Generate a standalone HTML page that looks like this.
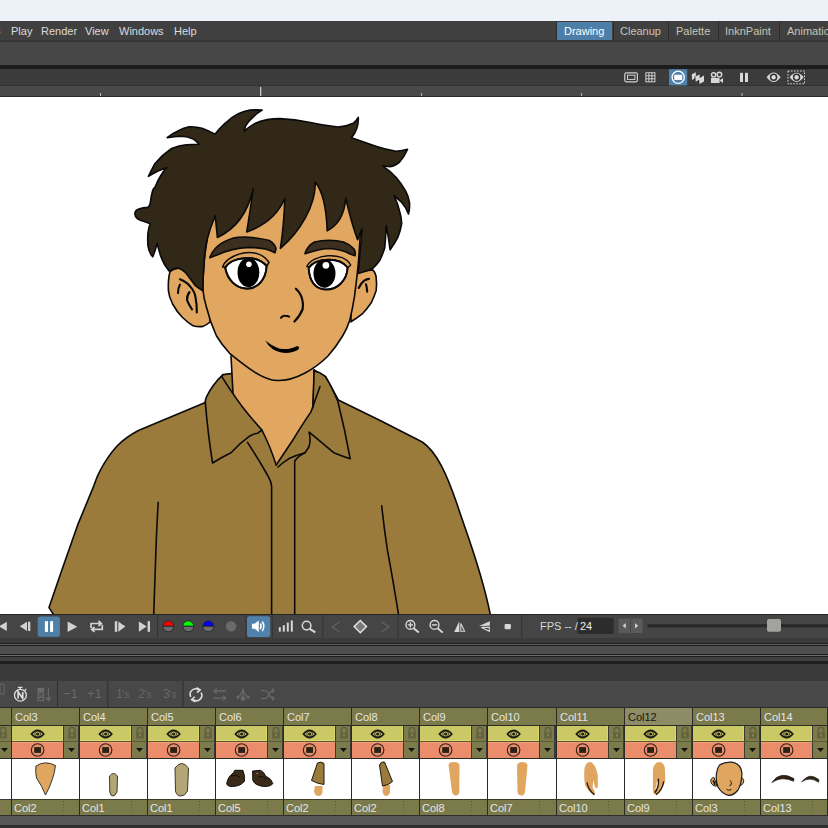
<!DOCTYPE html>
<html><head><meta charset="utf-8">
<style>
*{margin:0;padding:0;box-sizing:border-box}
html,body{width:828px;height:828px;overflow:hidden;background:#3a3a3a;font-family:"Liberation Sans",sans-serif}
.a{position:absolute}
.t{position:absolute;white-space:nowrap;font-size:11px;line-height:13px}
</style></head>
<body>
<!-- top light strip -->
<div class="a" style="left:0;top:0;width:828px;height:21px;background:#ecf2f8"></div>
<!-- menu bar -->
<div class="a" style="left:0;top:21px;width:828px;height:19px;background:#404040"></div>
<div class="a" style="left:0;top:40px;width:828px;height:2px;background:#353535"></div>
<div class="t" style="left:-5px;top:24px;color:#dcdcdc">s</div>
<div class="t" style="left:11px;top:24.5px;color:#dcdcdc">Play</div>
<div class="t" style="left:41px;top:24.5px;color:#dcdcdc">Render</div>
<div class="t" style="left:85px;top:24.5px;color:#dcdcdc">View</div>
<div class="t" style="left:119px;top:24.5px;color:#dcdcdc">Windows</div>
<div class="t" style="left:174px;top:24.5px;color:#dcdcdc">Help</div>
<!-- room tabs -->
<div class="a" style="left:556px;top:21px;width:1px;height:19px;background:#2c2c2c"></div>
<div class="a" style="left:557px;top:22px;width:55px;height:18px;background:#4d7ea8"></div>
<div class="t" style="left:564px;top:25px;color:#ffffff">Drawing</div>
<div class="a" style="left:613px;top:21px;width:1px;height:19px;background:#2c2c2c"></div>
<div class="t" style="left:620px;top:25px;color:#c8c4b4">Cleanup</div>
<div class="a" style="left:668px;top:21px;width:1px;height:19px;background:#2c2c2c"></div>
<div class="t" style="left:676px;top:25px;color:#c8c4b4">Palette</div>
<div class="a" style="left:718px;top:21px;width:1px;height:19px;background:#2c2c2c"></div>
<div class="t" style="left:725px;top:25px;color:#c8c4b4">InknPaint</div>
<div class="a" style="left:779px;top:21px;width:1px;height:19px;background:#2c2c2c"></div>
<div class="t" style="left:787px;top:25px;color:#c8c4b4">Animation</div>
<!-- toolbar row -->
<div class="a" style="left:0;top:42px;width:828px;height:23px;background:#474747"></div>
<div class="a" style="left:0;top:65px;width:828px;height:4px;background:#1d1d1d"></div>
<!-- viewer toolbar -->
<div class="a" style="left:0;top:69px;width:828px;height:16px;background:#3b3b3b"></div>
<div class="a" style="left:0;top:85px;width:828px;height:1px;background:#313236"></div>
<!-- ruler -->
<div class="a" style="left:0;top:86px;width:828px;height:10px;background:#494949"></div>
<div class="a" style="left:0;top:96px;width:828px;height:1px;background:#2a2a2a"></div>
<!-- canvas -->
<div class="a" style="left:0;top:97px;width:828px;height:517px;background:#ffffff"></div>
<!-- CHAR START -->
<svg class="a" style="left:0;top:0" width="828" height="828" viewBox="0 0 828 828">
<defs><clipPath id="cv"><rect x="0" y="97" width="828" height="517"/></clipPath></defs>
<g clip-path="url(#cv)" stroke="#0a0a0a" stroke-width="1.6" stroke-linejoin="round" stroke-linecap="round">
<!-- shirt body -->
<path fill="#9a7b3c" d="M54.5 616 L49 607.6 L61.1 572.2 L77.5 525.4 L93.9 485.6 Q97 476 100.9 469.2 Q108 456 117.3 445.8 Q126 437 138.4 430.5 L204.7 402.7 L222.9 374.6 Q270 368 314 370 L325.5 376.7 L338.3 400 Q380 420 422.3 442 C437 452 447 475 457.1 504.3 C466 532 481 568 490.2 614 L491 620 Z"/>
<!-- neck -->
<path fill="#e1a65f" stroke="none" d="M231 350 L233.1 395.2 L241.3 405.4 L261.9 430 L276.2 465 L292.7 440.3 L311.1 411.6 L313.2 407.5 L314.2 365 Z"/>
<path fill="none" d="M231 356 L233.1 395.2"/>
<path fill="none" d="M314.2 370 L313.2 407.5"/>
<!-- left collar -->
<path fill="#9a7b3c" d="M222.9 374.6 Q212 385 206.4 397.2 Q205 400 205.4 403.4 Q208 435 212.6 463 Q222 457 231 452.7 Q240 443 249.5 436.2 Q254 433.5 257.8 433.2 L261.9 430 Q251 418 241.3 405.4 Q230 390 221.8 376.7 Z"/>
<path fill="none" d="M261.9 430 Q270 446 276.2 465"/>
<path fill="none" d="M247.5 442.4 Q259 460 268 476 Q271 481 271.6 486 L271.6 615"/>
<!-- right collar -->
<path fill="#9a7b3c" stroke="none" d="M314.2 371 Q320 372 325.5 376.7 Q332 387 337.8 401.3 Q345 430 350.2 458.8 Q342 456 333.7 452.7 Q320 441 309.1 432.1 Q311 440 309.1 446.5 Q307 450 305 452.7 Q296 455 288.6 458.8 Q282 463 278 467 L276.2 465 Q285 452 292.7 440.3 L311.1 411.6 L313.2 407.5 Z"/>
<path fill="none" d="M314.2 371 Q320 372 325.5 376.7 Q332 387 337.8 401.3 Q345 430 350.2 458.8 Q342 456 333.7 452.7 Q320 441 309.1 432.1 Q311 440 309.1 446.5 Q307 450 305 452.7 Q296 455 288.6 458.8 Q282 463 278 467"/>
<path fill="none" d="M320 386.5 L311.1 411.6 Q300 428 292.7 440.3 Q285 452 276.2 465"/>
<path fill="none" d="M314.2 370 L312.8 408"/>
<path fill="none" d="M305 452.7 Q298 456 294.7 461 L294.7 615"/>
<!-- sleeve lines -->
<path fill="none" stroke-width="1.6" d="M158.2 502.3 Q156.5 530 155.6 559.4 L153.7 615"/>
<path fill="none" stroke-width="1.6" d="M381.7 505.8 Q384 528 387.5 550.7 Q393 580 398.6 615"/>
<!-- ears -->
<path fill="#e1a65f" d="M190 273 Q180 264 170 271.5 Q167.8 280 168.4 290.7 Q169 297 172.6 304 Q177 312 182.3 317.3 Q188 323 193.1 325.7 Q198 327 202.8 326.4 Q206 325.5 210 322 L212 285 Z"/>
<path fill="#e1a65f" d="M352 273 Q362 271 372.6 269.9 Q376 273 376.2 278.3 Q377 284 376.2 290.4 Q374 297 371.4 302.5 Q367 309 362.9 313.3 Q357 318 350.9 321.8 Z"/>
<!-- face -->
<path fill="#e1a65f" d="M212 175 L362 175 L360.5 230 Q359.5 248 358.1 266.2 Q356.5 281 354.5 296.4 Q352.5 309 349.7 320.6 Q347 329 342.6 336 Q336 347 328 356 C316 368 296 381 277 380.5 C262 380 244 365 229.6 353.3 Q222 345 216.5 336 Q210 322 206.4 307 Q203.5 298 202.8 288.3 Q203 276 204 264.2 Q205 252 207 240 Z"/>
<!-- hair -->
<path fill="#312818" d="M171.6 148.5 Q179 145.5 186.1 144.9 Q193 144.5 199.1 144.2 Q196 140.5 193.3 139.1 Q188 136.5 181.7 136.2 Q174 136.3 167.2 137.7 Q172 133.5 177.4 131.2 Q183 128 189 126.8 Q196 126.5 202 128.3 Q209 131 215.1 134.1 Q220 128 225.2 123.2 Q231 117.5 238.3 113.8 Q244 111 249.9 110.1 Q256 109.6 262.2 110.1 Q257 113 252.8 117.4 Q248 121.5 245.5 126.1 L244.1 131.2 Q249 127 254.2 123.9 Q260 121 267.2 119.6 Q273 118.6 280 118.6 Q295 119.5 309 122.2 Q324 125.5 338 127 Q346 126.5 353.4 123.2 Q356.5 120.5 358.3 117.4 Q359 129 351.5 137.7 Q364 142 376.6 146.4 Q386 149.5 396 151.2 Q402 151 407.5 149.3 Q404 157 399.8 161.8 Q395 166 390 166.7 L382.4 165.7 Q390 171 396 177.3 Q401 183 405.6 190.8 Q408.5 196 409.5 202.4 Q410 208 408.5 214 Q406 207 401.7 202.4 L394 195.7 Q398 204 399.8 212 Q401.5 217 401.7 223.7 Q400.5 231 397.9 237.2 Q394.5 244 390.1 249.8 Q388.5 237 386.3 225.6 Q386 228 385.9 232 Q385.5 240 384.7 248.1 Q382.5 255 379.9 260.2 Q376.5 265 372.6 268.6 Q366 271.5 358.1 273.5 L360.3 250 L362 228.7 L357.6 239.6 Q352 225 345.7 198.3 Q344 222 327.2 230.9 Q326 195 315.2 182 C316 205 300 232 280.4 248.3 Q284 225 284.8 198.3 Q275 222 246.7 232 Q249.5 215 253.3 188.5 Q245 225 217.4 237.4 L215.2 215.7 Q210 228 207 240 Q204.5 252 204 264.2 Q203 277 202.8 290.7 Q199 288.5 195.6 285.9 Q191.5 280.5 187.6 275.3 Q183.5 269.8 178.9 268.3 Q176 267.8 173.5 268.8 Q171 270 169.1 271 Q167 268 164.8 265 Q162 260 160.4 255.2 Q158.5 249 157.2 243.3 Q155.5 250 152.8 256.8 Q151.5 255.5 150.7 254.1 Q148.5 250 147.9 245.4 Q147.5 239 147.9 233.5 Q148.5 228 150.1 223.7 Q147 222.5 144.1 221.5 Q140 220.5 137.6 218.8 Q134.5 216 134.9 213.4 Q135.5 210 138.7 209 Q143 207.5 147.9 207.4 Q149.5 206 150.1 204.1 Q151 196 152.8 190 Q154 188 155.1 187 Q160 175 166.7 167.6 Q157 171 148.4 176.3 Q151 171 155 163.5 Q162 155 171.6 148.5 Z"/>
<!-- eyebrows -->
<path fill="#3d2f1f" d="M209.8 257.7 Q213.5 248 221.7 243.1 Q229 238.5 238 237.2 Q246 236.5 254.3 237.7 Q262 238.5 269.6 240.6 Q275 244 276 248.5 L275 252.8 Q270 250 265.2 249 Q257 247.5 248.9 247.4 Q240 247.8 232.6 249.6 Q225 251.5 219.6 253.9 Z"/>
<path fill="#3d2f1f" d="M305 253.8 Q307 246 314.5 242 Q321 240.3 329 240.3 Q337 240.5 343.5 242 Q350 244.5 353.6 248.5 Q356 252 355 255.8 Q353 255 350.7 254.3 Q345.5 251.5 339.8 250 Q334 248.6 329 248.5 Q323 248.7 318 250 Q312 251.8 305 253.8 Z"/>
<!-- eyes: lid crease -->
<path fill="#e1a65f" stroke-width="1.5" d="M222.6 267 C225.8 255 256.8 243.8 269 262.5 L266 267 Z"/>
<path fill="#e1a65f" stroke-width="1.4" d="M306.8 266.5 C311.8 254.6 343.2 250.4 350.7 265 L347.5 268 Z"/>
<!-- eye whites -->
<path fill="#ffffff" d="M225.2 267.8 C231 257 256 253.5 266.6 266 C266 280 257 289 246.5 288.6 C236 288.2 227.5 280 225.2 267.8 Z"/>
<path fill="#ffffff" d="M308.6 268 C315 258 339 256 347.6 267.5 C347 280 338 289.7 326 289.5 C315 289.2 309.5 281 308.6 268 Z"/>
<ellipse cx="248.4" cy="272.4" rx="10.9" ry="14.7" fill="#000" stroke="none"/>
<ellipse cx="324.5" cy="273.5" rx="11" ry="14.2" fill="#000" stroke="none"/>
<circle cx="248.9" cy="264.2" r="2.8" fill="#fff" stroke="none"/>
<circle cx="325.9" cy="265.3" r="3.4" fill="#fff" stroke="none"/>
<path fill="none" stroke-width="2" d="M225.2 267.8 C231 257 256 253.5 266.6 266 C266 280 257 289 246.5 288.6 C236 288.2 227.5 280 225.2 267.8 Z"/>
<path fill="none" stroke-width="2" d="M308.6 268 C315 258 339 256 347.6 267.5 C347 280 338 289.7 326 289.5 C315 289.2 309.5 281 308.6 268 Z"/>
<!-- ear marks -->
<path fill="none" stroke-width="2.1" d="M179.9 279.3 Q187 282 190.7 287.1 Q195 292 195.6 298 Q197 305 196.8 312.5"/>
<path fill="none" stroke-width="2.1" d="M179.9 284.7 Q178 288 178 293.1"/>
<path fill="none" stroke-width="2.1" d="M189.5 292 Q186.5 296 187.1 300.4 Q189 305 192 309.4"/>
<path fill="none" stroke-width="2.1" d="M358.7 288 Q361 283 364.2 280.7 Q367 279 369 278.9"/>
<path fill="none" stroke-width="2.1" d="M366 284.3 Q367 288 367.2 291.6"/>
<!-- nose -->
<path fill="none" stroke-width="2.2" d="M295.9 288.7 Q301 293.5 302.2 299.3 Q303.5 304 302.7 309 Q300 316 294.4 321.5"/>
<path fill="none" stroke-width="2" d="M280.9 317.7 Q283 315.5 284.8 315.7 Q287.5 315.8 289.1 316.7"/>
<!-- mouth -->
<path fill="#000" stroke="none" d="M265.3 340.3 Q272 346.5 280 348.7 Q290 350 296.5 346.2 Q299.5 345.8 299 348.5 Q297 351.5 289 352.8 Q280 353.5 272.5 349 Q267.5 345.5 265.3 340.3 Z"/>
</g>
</svg>
<!-- CHAR END -->
<div class="a" style="left:0;top:614px;width:828px;height:1px;background:#242424"></div>
<!-- playback bar -->
<div class="a" style="left:0;top:615px;width:828px;height:23px;background:#454545"></div>
<div class="a" style="left:0;top:638px;width:828px;height:5px;background:#3b3b3b"></div>
<div class="a" style="left:0;top:643px;width:828px;height:1px;background:#1c1c1c"></div>
<div class="a" style="left:0;top:644px;width:828px;height:1px;background:#5e5e5e"></div>
<div class="a" style="left:0;top:645px;width:828px;height:1px;background:#1c1c1c"></div>
<div class="a" style="left:0;top:646px;width:828px;height:8px;background:#4e4e4e"></div>
<div class="a" style="left:0;top:654px;width:828px;height:1px;background:#1c1c1c"></div>
<div class="a" style="left:0;top:655px;width:828px;height:1px;background:#6a6a6a"></div>
<div class="a" style="left:0;top:656px;width:828px;height:1px;background:#1c1c1c"></div>
<div class="a" style="left:0;top:657px;width:828px;height:4px;background:#3f3f3f"></div>
<div class="a" style="left:0;top:661px;width:828px;height:3px;background:#1e1e1e"></div>
<div class="a" style="left:0;top:664px;width:828px;height:17px;background:#3a3a3a"></div>
<!-- timeline toolbar -->
<div class="a" style="left:0;top:681px;width:828px;height:26px;background:#484848"></div>
<div class="a" style="left:0;top:707px;width:828px;height:1px;background:#2a2a2a"></div>
<!-- columns container -->
<!-- COLS START -->
<div class="a" style="left:0;top:708px;width:11px;height:17px;background:#7b7a4b"></div>
<div class="a" style="left:0;top:725px;width:11px;height:1px;background:#2b2b26"></div>
<div class="a" style="left:0;top:726px;width:11px;height:15px;background:#7c7b4c"></div>
<div class="a" style="left:0;top:741px;width:11px;height:1px;background:#5a5936"></div>
<div class="a" style="left:0;top:742px;width:11px;height:16px;background:#7c7b4c"></div>
<svg class="a" style="left:-2px;top:726px" width="10" height="14" viewBox="0 0 10 14"><path d="M2.2 7 V4.3 A2.8 2.8 0 0 1 7.8 4.3 V7" fill="none" stroke="#63623b" stroke-width="1.4"/><rect x="1.2" y="6.5" width="7.6" height="6" fill="#63623b"/><circle cx="5" cy="8.8" r="1.1" fill="#83825a"/><path d="M4.4 9 L5.6 9 L5.3 11.6 L4.7 11.6Z" fill="#83825a"/></svg>
<svg class="a" style="left:1px;top:748px" width="7" height="4" viewBox="0 0 7 4"><path d="M0 0H7L3.5 4Z" fill="#141210"/></svg>
<div class="a" style="left:0;top:758px;width:11px;height:1px;background:#2b2b26"></div>
<div class="a" style="left:0;top:759px;width:11px;height:40px;background:#fff"></div>
<div class="a" style="left:0;top:800px;width:11px;height:15px;background:#7b7a4b"></div>
<div class="a" style="left:11px;top:708px;width:1px;height:107px;background:#2b2b26"></div>
<div class="a" style="left:12px;top:708px;width:67px;height:17px;background:#7b7a4b"></div>
<div class="t" style="left:15px;top:711px;color:#e6e6e6">Col3</div>
<div class="a" style="left:12px;top:725px;width:67px;height:1px;background:#2b2b26"></div>
<div class="a" style="left:12px;top:726px;width:51px;height:15px;background:#cbc866"></div>
<div class="a" style="left:62px;top:726px;width:1px;height:15px;background:#ddd86c"></div>
<div class="a" style="left:12px;top:740px;width:51px;height:1px;background:#dcd86a"></div>
<div class="a" style="left:63px;top:726px;width:1px;height:32px;background:#3a3a30"></div>
<div class="a" style="left:64px;top:726px;width:14px;height:15px;background:#7c7b4c"></div>
<div class="a" style="left:12px;top:741px;width:67px;height:1px;background:#5a5936"></div>
<div class="a" style="left:12px;top:742px;width:51px;height:16px;background:#eb8d6b"></div>
<div class="a" style="left:64px;top:742px;width:14px;height:16px;background:#7c7b4c"></div>
<div class="a" style="left:12px;top:742px;width:51px;height:1px;background:#f29c76"></div>
<svg class="a" style="left:30px;top:729px" width="15" height="10" viewBox="0 0 15 10"><path d="M1.4 5 Q7.6 -2.4 13.8 5 Q7.6 12.4 1.4 5Z" fill="none" stroke="#1c1a10" stroke-width="1.7"/><circle cx="7.6" cy="5" r="2.9" fill="none" stroke="#1c1a10" stroke-width="0.8"/><circle cx="7.6" cy="5" r="1.5" fill="#1c1a10"/></svg>
<svg class="a" style="left:30px;top:743px" width="15" height="14" viewBox="0 0 15 14"><circle cx="7.6" cy="7" r="6.3" fill="none" stroke="#2a2016" stroke-width="1.1"/><rect x="4.2" y="4.1" width="6.8" height="5.8" fill="#2a2016"/></svg>
<svg class="a" style="left:67px;top:726px" width="10" height="14" viewBox="0 0 10 14"><path d="M2.2 7 V4.3 A2.8 2.8 0 0 1 7.8 4.3 V7" fill="none" stroke="#63623b" stroke-width="1.4"/><rect x="1.2" y="6.5" width="7.6" height="6" fill="#63623b"/><circle cx="5" cy="8.8" r="1.1" fill="#83825a"/><path d="M4.4 9 L5.6 9 L5.3 11.6 L4.7 11.6Z" fill="#83825a"/></svg>
<svg class="a" style="left:68px;top:748px" width="7" height="4" viewBox="0 0 7 4"><path d="M0 0H7L3.5 4Z" fill="#141210"/></svg>
<div class="a" style="left:12px;top:758px;width:67px;height:1px;background:#2b2b26"></div>
<div class="a" style="left:12px;top:759px;width:67px;height:40px;background:#fff"></div>
<div class="a" style="left:12px;top:799px;width:67px;height:1px;background:#3a3a26"></div>
<div class="a" style="left:12px;top:800px;width:67px;height:15px;background:#7b7a4b"></div>
<div class="t" style="left:14px;top:802px;color:#e6e6e6">Col2</div>
<div class="a" style="left:63px;top:801px;width:1px;height:12px;background-image:linear-gradient(#5c5b38 50%,transparent 50%);background-size:1px 3px"></div>
<div id="th0"></div>
<div class="a" style="left:79px;top:708px;width:1px;height:107px;background:#2b2b26"></div>
<div class="a" style="left:80px;top:708px;width:67px;height:17px;background:#7b7a4b"></div>
<div class="t" style="left:83px;top:711px;color:#e6e6e6">Col4</div>
<div class="a" style="left:80px;top:725px;width:67px;height:1px;background:#2b2b26"></div>
<div class="a" style="left:80px;top:726px;width:51px;height:15px;background:#cbc866"></div>
<div class="a" style="left:130px;top:726px;width:1px;height:15px;background:#ddd86c"></div>
<div class="a" style="left:80px;top:740px;width:51px;height:1px;background:#dcd86a"></div>
<div class="a" style="left:131px;top:726px;width:1px;height:32px;background:#3a3a30"></div>
<div class="a" style="left:132px;top:726px;width:14px;height:15px;background:#7c7b4c"></div>
<div class="a" style="left:80px;top:741px;width:67px;height:1px;background:#5a5936"></div>
<div class="a" style="left:80px;top:742px;width:51px;height:16px;background:#eb8d6b"></div>
<div class="a" style="left:132px;top:742px;width:14px;height:16px;background:#7c7b4c"></div>
<div class="a" style="left:80px;top:742px;width:51px;height:1px;background:#f29c76"></div>
<svg class="a" style="left:98px;top:729px" width="15" height="10" viewBox="0 0 15 10"><path d="M1.4 5 Q7.6 -2.4 13.8 5 Q7.6 12.4 1.4 5Z" fill="none" stroke="#1c1a10" stroke-width="1.7"/><circle cx="7.6" cy="5" r="2.9" fill="none" stroke="#1c1a10" stroke-width="0.8"/><circle cx="7.6" cy="5" r="1.5" fill="#1c1a10"/></svg>
<svg class="a" style="left:98px;top:743px" width="15" height="14" viewBox="0 0 15 14"><circle cx="7.6" cy="7" r="6.3" fill="none" stroke="#2a2016" stroke-width="1.1"/><rect x="4.2" y="4.1" width="6.8" height="5.8" fill="#2a2016"/></svg>
<svg class="a" style="left:135px;top:726px" width="10" height="14" viewBox="0 0 10 14"><path d="M2.2 7 V4.3 A2.8 2.8 0 0 1 7.8 4.3 V7" fill="none" stroke="#63623b" stroke-width="1.4"/><rect x="1.2" y="6.5" width="7.6" height="6" fill="#63623b"/><circle cx="5" cy="8.8" r="1.1" fill="#83825a"/><path d="M4.4 9 L5.6 9 L5.3 11.6 L4.7 11.6Z" fill="#83825a"/></svg>
<svg class="a" style="left:136px;top:748px" width="7" height="4" viewBox="0 0 7 4"><path d="M0 0H7L3.5 4Z" fill="#141210"/></svg>
<div class="a" style="left:80px;top:758px;width:67px;height:1px;background:#2b2b26"></div>
<div class="a" style="left:80px;top:759px;width:67px;height:40px;background:#fff"></div>
<div class="a" style="left:80px;top:799px;width:67px;height:1px;background:#3a3a26"></div>
<div class="a" style="left:80px;top:800px;width:67px;height:15px;background:#7b7a4b"></div>
<div class="t" style="left:82px;top:802px;color:#e6e6e6">Col1</div>
<div class="a" style="left:131px;top:801px;width:1px;height:12px;background-image:linear-gradient(#5c5b38 50%,transparent 50%);background-size:1px 3px"></div>
<div id="th1"></div>
<div class="a" style="left:147px;top:708px;width:1px;height:107px;background:#2b2b26"></div>
<div class="a" style="left:148px;top:708px;width:67px;height:17px;background:#7b7a4b"></div>
<div class="t" style="left:151px;top:711px;color:#e6e6e6">Col5</div>
<div class="a" style="left:148px;top:725px;width:67px;height:1px;background:#2b2b26"></div>
<div class="a" style="left:148px;top:726px;width:51px;height:15px;background:#cbc866"></div>
<div class="a" style="left:198px;top:726px;width:1px;height:15px;background:#ddd86c"></div>
<div class="a" style="left:148px;top:740px;width:51px;height:1px;background:#dcd86a"></div>
<div class="a" style="left:199px;top:726px;width:1px;height:32px;background:#3a3a30"></div>
<div class="a" style="left:200px;top:726px;width:14px;height:15px;background:#7c7b4c"></div>
<div class="a" style="left:148px;top:741px;width:67px;height:1px;background:#5a5936"></div>
<div class="a" style="left:148px;top:742px;width:51px;height:16px;background:#eb8d6b"></div>
<div class="a" style="left:200px;top:742px;width:14px;height:16px;background:#7c7b4c"></div>
<div class="a" style="left:148px;top:742px;width:51px;height:1px;background:#f29c76"></div>
<svg class="a" style="left:166px;top:729px" width="15" height="10" viewBox="0 0 15 10"><path d="M1.4 5 Q7.6 -2.4 13.8 5 Q7.6 12.4 1.4 5Z" fill="none" stroke="#1c1a10" stroke-width="1.7"/><circle cx="7.6" cy="5" r="2.9" fill="none" stroke="#1c1a10" stroke-width="0.8"/><circle cx="7.6" cy="5" r="1.5" fill="#1c1a10"/></svg>
<svg class="a" style="left:166px;top:743px" width="15" height="14" viewBox="0 0 15 14"><circle cx="7.6" cy="7" r="6.3" fill="none" stroke="#2a2016" stroke-width="1.1"/><rect x="4.2" y="4.1" width="6.8" height="5.8" fill="#2a2016"/></svg>
<svg class="a" style="left:203px;top:726px" width="10" height="14" viewBox="0 0 10 14"><path d="M2.2 7 V4.3 A2.8 2.8 0 0 1 7.8 4.3 V7" fill="none" stroke="#63623b" stroke-width="1.4"/><rect x="1.2" y="6.5" width="7.6" height="6" fill="#63623b"/><circle cx="5" cy="8.8" r="1.1" fill="#83825a"/><path d="M4.4 9 L5.6 9 L5.3 11.6 L4.7 11.6Z" fill="#83825a"/></svg>
<svg class="a" style="left:204px;top:748px" width="7" height="4" viewBox="0 0 7 4"><path d="M0 0H7L3.5 4Z" fill="#141210"/></svg>
<div class="a" style="left:148px;top:758px;width:67px;height:1px;background:#2b2b26"></div>
<div class="a" style="left:148px;top:759px;width:67px;height:40px;background:#fff"></div>
<div class="a" style="left:148px;top:799px;width:67px;height:1px;background:#3a3a26"></div>
<div class="a" style="left:148px;top:800px;width:67px;height:15px;background:#7b7a4b"></div>
<div class="t" style="left:150px;top:802px;color:#e6e6e6">Col1</div>
<div class="a" style="left:199px;top:801px;width:1px;height:12px;background-image:linear-gradient(#5c5b38 50%,transparent 50%);background-size:1px 3px"></div>
<div id="th2"></div>
<div class="a" style="left:215px;top:708px;width:1px;height:107px;background:#2b2b26"></div>
<div class="a" style="left:216px;top:708px;width:67px;height:17px;background:#7b7a4b"></div>
<div class="t" style="left:219px;top:711px;color:#e6e6e6">Col6</div>
<div class="a" style="left:216px;top:725px;width:67px;height:1px;background:#2b2b26"></div>
<div class="a" style="left:216px;top:726px;width:51px;height:15px;background:#cbc866"></div>
<div class="a" style="left:266px;top:726px;width:1px;height:15px;background:#ddd86c"></div>
<div class="a" style="left:216px;top:740px;width:51px;height:1px;background:#dcd86a"></div>
<div class="a" style="left:267px;top:726px;width:1px;height:32px;background:#3a3a30"></div>
<div class="a" style="left:268px;top:726px;width:14px;height:15px;background:#7c7b4c"></div>
<div class="a" style="left:216px;top:741px;width:67px;height:1px;background:#5a5936"></div>
<div class="a" style="left:216px;top:742px;width:51px;height:16px;background:#eb8d6b"></div>
<div class="a" style="left:268px;top:742px;width:14px;height:16px;background:#7c7b4c"></div>
<div class="a" style="left:216px;top:742px;width:51px;height:1px;background:#f29c76"></div>
<svg class="a" style="left:234px;top:729px" width="15" height="10" viewBox="0 0 15 10"><path d="M1.4 5 Q7.6 -2.4 13.8 5 Q7.6 12.4 1.4 5Z" fill="none" stroke="#1c1a10" stroke-width="1.7"/><circle cx="7.6" cy="5" r="2.9" fill="none" stroke="#1c1a10" stroke-width="0.8"/><circle cx="7.6" cy="5" r="1.5" fill="#1c1a10"/></svg>
<svg class="a" style="left:234px;top:743px" width="15" height="14" viewBox="0 0 15 14"><circle cx="7.6" cy="7" r="6.3" fill="none" stroke="#2a2016" stroke-width="1.1"/><rect x="4.2" y="4.1" width="6.8" height="5.8" fill="#2a2016"/></svg>
<svg class="a" style="left:271px;top:726px" width="10" height="14" viewBox="0 0 10 14"><path d="M2.2 7 V4.3 A2.8 2.8 0 0 1 7.8 4.3 V7" fill="none" stroke="#63623b" stroke-width="1.4"/><rect x="1.2" y="6.5" width="7.6" height="6" fill="#63623b"/><circle cx="5" cy="8.8" r="1.1" fill="#83825a"/><path d="M4.4 9 L5.6 9 L5.3 11.6 L4.7 11.6Z" fill="#83825a"/></svg>
<svg class="a" style="left:272px;top:748px" width="7" height="4" viewBox="0 0 7 4"><path d="M0 0H7L3.5 4Z" fill="#141210"/></svg>
<div class="a" style="left:216px;top:758px;width:67px;height:1px;background:#2b2b26"></div>
<div class="a" style="left:216px;top:759px;width:67px;height:40px;background:#fff"></div>
<div class="a" style="left:216px;top:799px;width:67px;height:1px;background:#3a3a26"></div>
<div class="a" style="left:216px;top:800px;width:67px;height:15px;background:#7b7a4b"></div>
<div class="t" style="left:218px;top:802px;color:#e6e6e6">Col5</div>
<div class="a" style="left:267px;top:801px;width:1px;height:12px;background-image:linear-gradient(#5c5b38 50%,transparent 50%);background-size:1px 3px"></div>
<div id="th3"></div>
<div class="a" style="left:283px;top:708px;width:1px;height:107px;background:#2b2b26"></div>
<div class="a" style="left:284px;top:708px;width:67px;height:17px;background:#7b7a4b"></div>
<div class="t" style="left:287px;top:711px;color:#e6e6e6">Col7</div>
<div class="a" style="left:284px;top:725px;width:67px;height:1px;background:#2b2b26"></div>
<div class="a" style="left:284px;top:726px;width:51px;height:15px;background:#cbc866"></div>
<div class="a" style="left:334px;top:726px;width:1px;height:15px;background:#ddd86c"></div>
<div class="a" style="left:284px;top:740px;width:51px;height:1px;background:#dcd86a"></div>
<div class="a" style="left:335px;top:726px;width:1px;height:32px;background:#3a3a30"></div>
<div class="a" style="left:336px;top:726px;width:14px;height:15px;background:#7c7b4c"></div>
<div class="a" style="left:284px;top:741px;width:67px;height:1px;background:#5a5936"></div>
<div class="a" style="left:284px;top:742px;width:51px;height:16px;background:#eb8d6b"></div>
<div class="a" style="left:336px;top:742px;width:14px;height:16px;background:#7c7b4c"></div>
<div class="a" style="left:284px;top:742px;width:51px;height:1px;background:#f29c76"></div>
<svg class="a" style="left:302px;top:729px" width="15" height="10" viewBox="0 0 15 10"><path d="M1.4 5 Q7.6 -2.4 13.8 5 Q7.6 12.4 1.4 5Z" fill="none" stroke="#1c1a10" stroke-width="1.7"/><circle cx="7.6" cy="5" r="2.9" fill="none" stroke="#1c1a10" stroke-width="0.8"/><circle cx="7.6" cy="5" r="1.5" fill="#1c1a10"/></svg>
<svg class="a" style="left:302px;top:743px" width="15" height="14" viewBox="0 0 15 14"><circle cx="7.6" cy="7" r="6.3" fill="none" stroke="#2a2016" stroke-width="1.1"/><rect x="4.2" y="4.1" width="6.8" height="5.8" fill="#2a2016"/></svg>
<svg class="a" style="left:339px;top:726px" width="10" height="14" viewBox="0 0 10 14"><path d="M2.2 7 V4.3 A2.8 2.8 0 0 1 7.8 4.3 V7" fill="none" stroke="#63623b" stroke-width="1.4"/><rect x="1.2" y="6.5" width="7.6" height="6" fill="#63623b"/><circle cx="5" cy="8.8" r="1.1" fill="#83825a"/><path d="M4.4 9 L5.6 9 L5.3 11.6 L4.7 11.6Z" fill="#83825a"/></svg>
<svg class="a" style="left:340px;top:748px" width="7" height="4" viewBox="0 0 7 4"><path d="M0 0H7L3.5 4Z" fill="#141210"/></svg>
<div class="a" style="left:284px;top:758px;width:67px;height:1px;background:#2b2b26"></div>
<div class="a" style="left:284px;top:759px;width:67px;height:40px;background:#fff"></div>
<div class="a" style="left:284px;top:799px;width:67px;height:1px;background:#3a3a26"></div>
<div class="a" style="left:284px;top:800px;width:67px;height:15px;background:#7b7a4b"></div>
<div class="t" style="left:286px;top:802px;color:#e6e6e6">Col2</div>
<div class="a" style="left:335px;top:801px;width:1px;height:12px;background-image:linear-gradient(#5c5b38 50%,transparent 50%);background-size:1px 3px"></div>
<div id="th4"></div>
<div class="a" style="left:351px;top:708px;width:1px;height:107px;background:#2b2b26"></div>
<div class="a" style="left:352px;top:708px;width:67px;height:17px;background:#7b7a4b"></div>
<div class="t" style="left:355px;top:711px;color:#e6e6e6">Col8</div>
<div class="a" style="left:352px;top:725px;width:67px;height:1px;background:#2b2b26"></div>
<div class="a" style="left:352px;top:726px;width:51px;height:15px;background:#cbc866"></div>
<div class="a" style="left:402px;top:726px;width:1px;height:15px;background:#ddd86c"></div>
<div class="a" style="left:352px;top:740px;width:51px;height:1px;background:#dcd86a"></div>
<div class="a" style="left:403px;top:726px;width:1px;height:32px;background:#3a3a30"></div>
<div class="a" style="left:404px;top:726px;width:14px;height:15px;background:#7c7b4c"></div>
<div class="a" style="left:352px;top:741px;width:67px;height:1px;background:#5a5936"></div>
<div class="a" style="left:352px;top:742px;width:51px;height:16px;background:#eb8d6b"></div>
<div class="a" style="left:404px;top:742px;width:14px;height:16px;background:#7c7b4c"></div>
<div class="a" style="left:352px;top:742px;width:51px;height:1px;background:#f29c76"></div>
<svg class="a" style="left:370px;top:729px" width="15" height="10" viewBox="0 0 15 10"><path d="M1.4 5 Q7.6 -2.4 13.8 5 Q7.6 12.4 1.4 5Z" fill="none" stroke="#1c1a10" stroke-width="1.7"/><circle cx="7.6" cy="5" r="2.9" fill="none" stroke="#1c1a10" stroke-width="0.8"/><circle cx="7.6" cy="5" r="1.5" fill="#1c1a10"/></svg>
<svg class="a" style="left:370px;top:743px" width="15" height="14" viewBox="0 0 15 14"><circle cx="7.6" cy="7" r="6.3" fill="none" stroke="#2a2016" stroke-width="1.1"/><rect x="4.2" y="4.1" width="6.8" height="5.8" fill="#2a2016"/></svg>
<svg class="a" style="left:407px;top:726px" width="10" height="14" viewBox="0 0 10 14"><path d="M2.2 7 V4.3 A2.8 2.8 0 0 1 7.8 4.3 V7" fill="none" stroke="#63623b" stroke-width="1.4"/><rect x="1.2" y="6.5" width="7.6" height="6" fill="#63623b"/><circle cx="5" cy="8.8" r="1.1" fill="#83825a"/><path d="M4.4 9 L5.6 9 L5.3 11.6 L4.7 11.6Z" fill="#83825a"/></svg>
<svg class="a" style="left:408px;top:748px" width="7" height="4" viewBox="0 0 7 4"><path d="M0 0H7L3.5 4Z" fill="#141210"/></svg>
<div class="a" style="left:352px;top:758px;width:67px;height:1px;background:#2b2b26"></div>
<div class="a" style="left:352px;top:759px;width:67px;height:40px;background:#fff"></div>
<div class="a" style="left:352px;top:799px;width:67px;height:1px;background:#3a3a26"></div>
<div class="a" style="left:352px;top:800px;width:67px;height:15px;background:#7b7a4b"></div>
<div class="t" style="left:354px;top:802px;color:#e6e6e6">Col2</div>
<div class="a" style="left:403px;top:801px;width:1px;height:12px;background-image:linear-gradient(#5c5b38 50%,transparent 50%);background-size:1px 3px"></div>
<div id="th5"></div>
<div class="a" style="left:419px;top:708px;width:1px;height:107px;background:#2b2b26"></div>
<div class="a" style="left:420px;top:708px;width:67px;height:17px;background:#7b7a4b"></div>
<div class="t" style="left:423px;top:711px;color:#e6e6e6">Col9</div>
<div class="a" style="left:420px;top:725px;width:67px;height:1px;background:#2b2b26"></div>
<div class="a" style="left:420px;top:726px;width:51px;height:15px;background:#cbc866"></div>
<div class="a" style="left:470px;top:726px;width:1px;height:15px;background:#ddd86c"></div>
<div class="a" style="left:420px;top:740px;width:51px;height:1px;background:#dcd86a"></div>
<div class="a" style="left:471px;top:726px;width:1px;height:32px;background:#3a3a30"></div>
<div class="a" style="left:472px;top:726px;width:14px;height:15px;background:#7c7b4c"></div>
<div class="a" style="left:420px;top:741px;width:67px;height:1px;background:#5a5936"></div>
<div class="a" style="left:420px;top:742px;width:51px;height:16px;background:#eb8d6b"></div>
<div class="a" style="left:472px;top:742px;width:14px;height:16px;background:#7c7b4c"></div>
<div class="a" style="left:420px;top:742px;width:51px;height:1px;background:#f29c76"></div>
<svg class="a" style="left:438px;top:729px" width="15" height="10" viewBox="0 0 15 10"><path d="M1.4 5 Q7.6 -2.4 13.8 5 Q7.6 12.4 1.4 5Z" fill="none" stroke="#1c1a10" stroke-width="1.7"/><circle cx="7.6" cy="5" r="2.9" fill="none" stroke="#1c1a10" stroke-width="0.8"/><circle cx="7.6" cy="5" r="1.5" fill="#1c1a10"/></svg>
<svg class="a" style="left:438px;top:743px" width="15" height="14" viewBox="0 0 15 14"><circle cx="7.6" cy="7" r="6.3" fill="none" stroke="#2a2016" stroke-width="1.1"/><rect x="4.2" y="4.1" width="6.8" height="5.8" fill="#2a2016"/></svg>
<svg class="a" style="left:475px;top:726px" width="10" height="14" viewBox="0 0 10 14"><path d="M2.2 7 V4.3 A2.8 2.8 0 0 1 7.8 4.3 V7" fill="none" stroke="#63623b" stroke-width="1.4"/><rect x="1.2" y="6.5" width="7.6" height="6" fill="#63623b"/><circle cx="5" cy="8.8" r="1.1" fill="#83825a"/><path d="M4.4 9 L5.6 9 L5.3 11.6 L4.7 11.6Z" fill="#83825a"/></svg>
<svg class="a" style="left:476px;top:748px" width="7" height="4" viewBox="0 0 7 4"><path d="M0 0H7L3.5 4Z" fill="#141210"/></svg>
<div class="a" style="left:420px;top:758px;width:67px;height:1px;background:#2b2b26"></div>
<div class="a" style="left:420px;top:759px;width:67px;height:40px;background:#fff"></div>
<div class="a" style="left:420px;top:799px;width:67px;height:1px;background:#3a3a26"></div>
<div class="a" style="left:420px;top:800px;width:67px;height:15px;background:#7b7a4b"></div>
<div class="t" style="left:422px;top:802px;color:#e6e6e6">Col8</div>
<div class="a" style="left:471px;top:801px;width:1px;height:12px;background-image:linear-gradient(#5c5b38 50%,transparent 50%);background-size:1px 3px"></div>
<div id="th6"></div>
<div class="a" style="left:487px;top:708px;width:1px;height:107px;background:#2b2b26"></div>
<div class="a" style="left:488px;top:708px;width:68px;height:17px;background:#7b7a4b"></div>
<div class="t" style="left:491px;top:711px;color:#e6e6e6">Col10</div>
<div class="a" style="left:488px;top:725px;width:68px;height:1px;background:#2b2b26"></div>
<div class="a" style="left:488px;top:726px;width:51px;height:15px;background:#cbc866"></div>
<div class="a" style="left:538px;top:726px;width:1px;height:15px;background:#ddd86c"></div>
<div class="a" style="left:488px;top:740px;width:51px;height:1px;background:#dcd86a"></div>
<div class="a" style="left:539px;top:726px;width:1px;height:32px;background:#3a3a30"></div>
<div class="a" style="left:540px;top:726px;width:14px;height:15px;background:#7c7b4c"></div>
<div class="a" style="left:488px;top:741px;width:68px;height:1px;background:#5a5936"></div>
<div class="a" style="left:488px;top:742px;width:51px;height:16px;background:#eb8d6b"></div>
<div class="a" style="left:540px;top:742px;width:14px;height:16px;background:#7c7b4c"></div>
<div class="a" style="left:488px;top:742px;width:51px;height:1px;background:#f29c76"></div>
<svg class="a" style="left:506px;top:729px" width="15" height="10" viewBox="0 0 15 10"><path d="M1.4 5 Q7.6 -2.4 13.8 5 Q7.6 12.4 1.4 5Z" fill="none" stroke="#1c1a10" stroke-width="1.7"/><circle cx="7.6" cy="5" r="2.9" fill="none" stroke="#1c1a10" stroke-width="0.8"/><circle cx="7.6" cy="5" r="1.5" fill="#1c1a10"/></svg>
<svg class="a" style="left:506px;top:743px" width="15" height="14" viewBox="0 0 15 14"><circle cx="7.6" cy="7" r="6.3" fill="none" stroke="#2a2016" stroke-width="1.1"/><rect x="4.2" y="4.1" width="6.8" height="5.8" fill="#2a2016"/></svg>
<svg class="a" style="left:543px;top:726px" width="10" height="14" viewBox="0 0 10 14"><path d="M2.2 7 V4.3 A2.8 2.8 0 0 1 7.8 4.3 V7" fill="none" stroke="#63623b" stroke-width="1.4"/><rect x="1.2" y="6.5" width="7.6" height="6" fill="#63623b"/><circle cx="5" cy="8.8" r="1.1" fill="#83825a"/><path d="M4.4 9 L5.6 9 L5.3 11.6 L4.7 11.6Z" fill="#83825a"/></svg>
<svg class="a" style="left:544px;top:748px" width="7" height="4" viewBox="0 0 7 4"><path d="M0 0H7L3.5 4Z" fill="#141210"/></svg>
<div class="a" style="left:488px;top:758px;width:68px;height:1px;background:#2b2b26"></div>
<div class="a" style="left:488px;top:759px;width:68px;height:40px;background:#fff"></div>
<div class="a" style="left:488px;top:799px;width:68px;height:1px;background:#3a3a26"></div>
<div class="a" style="left:488px;top:800px;width:68px;height:15px;background:#7b7a4b"></div>
<div class="t" style="left:490px;top:802px;color:#e6e6e6">Col7</div>
<div class="a" style="left:539px;top:801px;width:1px;height:12px;background-image:linear-gradient(#5c5b38 50%,transparent 50%);background-size:1px 3px"></div>
<div id="th7"></div>
<div class="a" style="left:556px;top:708px;width:1px;height:107px;background:#2b2b26"></div>
<div class="a" style="left:557px;top:708px;width:67px;height:17px;background:#7b7a4b"></div>
<div class="t" style="left:560px;top:711px;color:#e6e6e6">Col11</div>
<div class="a" style="left:557px;top:725px;width:67px;height:1px;background:#2b2b26"></div>
<div class="a" style="left:557px;top:726px;width:51px;height:15px;background:#cbc866"></div>
<div class="a" style="left:607px;top:726px;width:1px;height:15px;background:#ddd86c"></div>
<div class="a" style="left:557px;top:740px;width:51px;height:1px;background:#dcd86a"></div>
<div class="a" style="left:608px;top:726px;width:1px;height:32px;background:#3a3a30"></div>
<div class="a" style="left:609px;top:726px;width:14px;height:15px;background:#7c7b4c"></div>
<div class="a" style="left:557px;top:741px;width:67px;height:1px;background:#5a5936"></div>
<div class="a" style="left:557px;top:742px;width:51px;height:16px;background:#eb8d6b"></div>
<div class="a" style="left:609px;top:742px;width:14px;height:16px;background:#7c7b4c"></div>
<div class="a" style="left:557px;top:742px;width:51px;height:1px;background:#f29c76"></div>
<svg class="a" style="left:575px;top:729px" width="15" height="10" viewBox="0 0 15 10"><path d="M1.4 5 Q7.6 -2.4 13.8 5 Q7.6 12.4 1.4 5Z" fill="none" stroke="#1c1a10" stroke-width="1.7"/><circle cx="7.6" cy="5" r="2.9" fill="none" stroke="#1c1a10" stroke-width="0.8"/><circle cx="7.6" cy="5" r="1.5" fill="#1c1a10"/></svg>
<svg class="a" style="left:575px;top:743px" width="15" height="14" viewBox="0 0 15 14"><circle cx="7.6" cy="7" r="6.3" fill="none" stroke="#2a2016" stroke-width="1.1"/><rect x="4.2" y="4.1" width="6.8" height="5.8" fill="#2a2016"/></svg>
<svg class="a" style="left:612px;top:726px" width="10" height="14" viewBox="0 0 10 14"><path d="M2.2 7 V4.3 A2.8 2.8 0 0 1 7.8 4.3 V7" fill="none" stroke="#63623b" stroke-width="1.4"/><rect x="1.2" y="6.5" width="7.6" height="6" fill="#63623b"/><circle cx="5" cy="8.8" r="1.1" fill="#83825a"/><path d="M4.4 9 L5.6 9 L5.3 11.6 L4.7 11.6Z" fill="#83825a"/></svg>
<svg class="a" style="left:613px;top:748px" width="7" height="4" viewBox="0 0 7 4"><path d="M0 0H7L3.5 4Z" fill="#141210"/></svg>
<div class="a" style="left:557px;top:758px;width:67px;height:1px;background:#2b2b26"></div>
<div class="a" style="left:557px;top:759px;width:67px;height:40px;background:#fff"></div>
<div class="a" style="left:557px;top:799px;width:67px;height:1px;background:#3a3a26"></div>
<div class="a" style="left:557px;top:800px;width:67px;height:15px;background:#7b7a4b"></div>
<div class="t" style="left:559px;top:802px;color:#e6e6e6">Col10</div>
<div class="a" style="left:608px;top:801px;width:1px;height:12px;background-image:linear-gradient(#5c5b38 50%,transparent 50%);background-size:1px 3px"></div>
<div id="th8"></div>
<div class="a" style="left:624px;top:708px;width:1px;height:107px;background:#2b2b26"></div>
<div class="a" style="left:625px;top:708px;width:67px;height:17px;background:#8e8c64"></div>
<div class="t" style="left:628px;top:711px;color:#161616">Col12</div>
<div class="a" style="left:625px;top:725px;width:67px;height:1px;background:#2b2b26"></div>
<div class="a" style="left:625px;top:726px;width:51px;height:15px;background:#cbc866"></div>
<div class="a" style="left:675px;top:726px;width:1px;height:15px;background:#ddd86c"></div>
<div class="a" style="left:625px;top:740px;width:51px;height:1px;background:#dcd86a"></div>
<div class="a" style="left:676px;top:726px;width:1px;height:32px;background:#3a3a30"></div>
<div class="a" style="left:677px;top:726px;width:14px;height:15px;background:#7c7b4c"></div>
<div class="a" style="left:625px;top:741px;width:67px;height:1px;background:#5a5936"></div>
<div class="a" style="left:625px;top:742px;width:51px;height:16px;background:#eb8d6b"></div>
<div class="a" style="left:677px;top:742px;width:14px;height:16px;background:#7c7b4c"></div>
<div class="a" style="left:625px;top:742px;width:51px;height:1px;background:#f29c76"></div>
<svg class="a" style="left:643px;top:729px" width="15" height="10" viewBox="0 0 15 10"><path d="M1.4 5 Q7.6 -2.4 13.8 5 Q7.6 12.4 1.4 5Z" fill="none" stroke="#1c1a10" stroke-width="1.7"/><circle cx="7.6" cy="5" r="2.9" fill="none" stroke="#1c1a10" stroke-width="0.8"/><circle cx="7.6" cy="5" r="1.5" fill="#1c1a10"/></svg>
<svg class="a" style="left:643px;top:743px" width="15" height="14" viewBox="0 0 15 14"><circle cx="7.6" cy="7" r="6.3" fill="none" stroke="#2a2016" stroke-width="1.1"/><rect x="4.2" y="4.1" width="6.8" height="5.8" fill="#2a2016"/></svg>
<svg class="a" style="left:680px;top:726px" width="10" height="14" viewBox="0 0 10 14"><path d="M2.2 7 V4.3 A2.8 2.8 0 0 1 7.8 4.3 V7" fill="none" stroke="#63623b" stroke-width="1.4"/><rect x="1.2" y="6.5" width="7.6" height="6" fill="#63623b"/><circle cx="5" cy="8.8" r="1.1" fill="#83825a"/><path d="M4.4 9 L5.6 9 L5.3 11.6 L4.7 11.6Z" fill="#83825a"/></svg>
<svg class="a" style="left:681px;top:748px" width="7" height="4" viewBox="0 0 7 4"><path d="M0 0H7L3.5 4Z" fill="#141210"/></svg>
<div class="a" style="left:625px;top:758px;width:67px;height:1px;background:#2b2b26"></div>
<div class="a" style="left:625px;top:759px;width:67px;height:40px;background:#fff"></div>
<div class="a" style="left:625px;top:799px;width:67px;height:1px;background:#3a3a26"></div>
<div class="a" style="left:625px;top:800px;width:67px;height:15px;background:#7b7a4b"></div>
<div class="t" style="left:627px;top:802px;color:#e6e6e6">Col9</div>
<div class="a" style="left:676px;top:801px;width:1px;height:12px;background-image:linear-gradient(#5c5b38 50%,transparent 50%);background-size:1px 3px"></div>
<div id="th9"></div>
<div class="a" style="left:692px;top:708px;width:1px;height:107px;background:#2b2b26"></div>
<div class="a" style="left:693px;top:708px;width:67px;height:17px;background:#7b7a4b"></div>
<div class="t" style="left:696px;top:711px;color:#e6e6e6">Col13</div>
<div class="a" style="left:693px;top:725px;width:67px;height:1px;background:#2b2b26"></div>
<div class="a" style="left:693px;top:726px;width:51px;height:15px;background:#cbc866"></div>
<div class="a" style="left:743px;top:726px;width:1px;height:15px;background:#ddd86c"></div>
<div class="a" style="left:693px;top:740px;width:51px;height:1px;background:#dcd86a"></div>
<div class="a" style="left:744px;top:726px;width:1px;height:32px;background:#3a3a30"></div>
<div class="a" style="left:745px;top:726px;width:14px;height:15px;background:#7c7b4c"></div>
<div class="a" style="left:693px;top:741px;width:67px;height:1px;background:#5a5936"></div>
<div class="a" style="left:693px;top:742px;width:51px;height:16px;background:#eb8d6b"></div>
<div class="a" style="left:745px;top:742px;width:14px;height:16px;background:#7c7b4c"></div>
<div class="a" style="left:693px;top:742px;width:51px;height:1px;background:#f29c76"></div>
<svg class="a" style="left:711px;top:729px" width="15" height="10" viewBox="0 0 15 10"><path d="M1.4 5 Q7.6 -2.4 13.8 5 Q7.6 12.4 1.4 5Z" fill="none" stroke="#1c1a10" stroke-width="1.7"/><circle cx="7.6" cy="5" r="2.9" fill="none" stroke="#1c1a10" stroke-width="0.8"/><circle cx="7.6" cy="5" r="1.5" fill="#1c1a10"/></svg>
<svg class="a" style="left:711px;top:743px" width="15" height="14" viewBox="0 0 15 14"><circle cx="7.6" cy="7" r="6.3" fill="none" stroke="#2a2016" stroke-width="1.1"/><rect x="4.2" y="4.1" width="6.8" height="5.8" fill="#2a2016"/></svg>
<svg class="a" style="left:748px;top:726px" width="10" height="14" viewBox="0 0 10 14"><path d="M2.2 7 V4.3 A2.8 2.8 0 0 1 7.8 4.3 V7" fill="none" stroke="#63623b" stroke-width="1.4"/><rect x="1.2" y="6.5" width="7.6" height="6" fill="#63623b"/><circle cx="5" cy="8.8" r="1.1" fill="#83825a"/><path d="M4.4 9 L5.6 9 L5.3 11.6 L4.7 11.6Z" fill="#83825a"/></svg>
<svg class="a" style="left:749px;top:748px" width="7" height="4" viewBox="0 0 7 4"><path d="M0 0H7L3.5 4Z" fill="#141210"/></svg>
<div class="a" style="left:693px;top:758px;width:67px;height:1px;background:#2b2b26"></div>
<div class="a" style="left:693px;top:759px;width:67px;height:40px;background:#fff"></div>
<div class="a" style="left:693px;top:799px;width:67px;height:1px;background:#3a3a26"></div>
<div class="a" style="left:693px;top:800px;width:67px;height:15px;background:#7b7a4b"></div>
<div class="t" style="left:695px;top:802px;color:#e6e6e6">Col3</div>
<div class="a" style="left:744px;top:801px;width:1px;height:12px;background-image:linear-gradient(#5c5b38 50%,transparent 50%);background-size:1px 3px"></div>
<div id="th10"></div>
<div class="a" style="left:760px;top:708px;width:1px;height:107px;background:#2b2b26"></div>
<div class="a" style="left:761px;top:708px;width:67px;height:17px;background:#7b7a4b"></div>
<div class="t" style="left:764px;top:711px;color:#e6e6e6">Col14</div>
<div class="a" style="left:761px;top:725px;width:67px;height:1px;background:#2b2b26"></div>
<div class="a" style="left:761px;top:726px;width:51px;height:15px;background:#cbc866"></div>
<div class="a" style="left:811px;top:726px;width:1px;height:15px;background:#ddd86c"></div>
<div class="a" style="left:761px;top:740px;width:51px;height:1px;background:#dcd86a"></div>
<div class="a" style="left:812px;top:726px;width:1px;height:32px;background:#3a3a30"></div>
<div class="a" style="left:813px;top:726px;width:14px;height:15px;background:#7c7b4c"></div>
<div class="a" style="left:761px;top:741px;width:67px;height:1px;background:#5a5936"></div>
<div class="a" style="left:761px;top:742px;width:51px;height:16px;background:#eb8d6b"></div>
<div class="a" style="left:813px;top:742px;width:14px;height:16px;background:#7c7b4c"></div>
<div class="a" style="left:761px;top:742px;width:51px;height:1px;background:#f29c76"></div>
<svg class="a" style="left:779px;top:729px" width="15" height="10" viewBox="0 0 15 10"><path d="M1.4 5 Q7.6 -2.4 13.8 5 Q7.6 12.4 1.4 5Z" fill="none" stroke="#1c1a10" stroke-width="1.7"/><circle cx="7.6" cy="5" r="2.9" fill="none" stroke="#1c1a10" stroke-width="0.8"/><circle cx="7.6" cy="5" r="1.5" fill="#1c1a10"/></svg>
<svg class="a" style="left:779px;top:743px" width="15" height="14" viewBox="0 0 15 14"><circle cx="7.6" cy="7" r="6.3" fill="none" stroke="#2a2016" stroke-width="1.1"/><rect x="4.2" y="4.1" width="6.8" height="5.8" fill="#2a2016"/></svg>
<svg class="a" style="left:816px;top:726px" width="10" height="14" viewBox="0 0 10 14"><path d="M2.2 7 V4.3 A2.8 2.8 0 0 1 7.8 4.3 V7" fill="none" stroke="#63623b" stroke-width="1.4"/><rect x="1.2" y="6.5" width="7.6" height="6" fill="#63623b"/><circle cx="5" cy="8.8" r="1.1" fill="#83825a"/><path d="M4.4 9 L5.6 9 L5.3 11.6 L4.7 11.6Z" fill="#83825a"/></svg>
<svg class="a" style="left:817px;top:748px" width="7" height="4" viewBox="0 0 7 4"><path d="M0 0H7L3.5 4Z" fill="#141210"/></svg>
<div class="a" style="left:761px;top:758px;width:67px;height:1px;background:#2b2b26"></div>
<div class="a" style="left:761px;top:759px;width:67px;height:40px;background:#fff"></div>
<div class="a" style="left:761px;top:799px;width:67px;height:1px;background:#3a3a26"></div>
<div class="a" style="left:761px;top:800px;width:67px;height:15px;background:#7b7a4b"></div>
<div class="t" style="left:763px;top:802px;color:#e6e6e6">Col13</div>
<div class="a" style="left:812px;top:801px;width:1px;height:12px;background-image:linear-gradient(#5c5b38 50%,transparent 50%);background-size:1px 3px"></div>
<div id="th11"></div>
<div class="a" style="left:827px;top:708px;width:1px;height:107px;background:#2b2b26"></div>
<!-- COLS END -->
<!-- THUMBS START -->
<svg class="a" style="left:0;top:0" width="828" height="828" viewBox="0 0 828 828">
<g stroke-linejoin="round">
<!-- Col3: ear/leaf -->
<path d="M36 766 Q45 760 55.5 765.5 Q54 779 45.5 795 Q42 786 36.5 778 Q35 771 36 766Z" fill="#e0a65f" stroke="#222" stroke-width="0.9"/>
<!-- Col4 bottle -->
<path d="M109.5 776 Q113.5 771 117.5 776 L117 792 Q115 796 113 796 Q110.5 796 109.8 792Z" fill="#b3a676" stroke="#3e3a26" stroke-width="1"/>
<!-- Col5 bottle larger -->
<path d="M175 768 Q181.5 759 188.5 768 L187.5 791 Q185 796 181 796 Q176.5 796 175.5 791Z" fill="#b3a676" stroke="#3e3a26" stroke-width="1"/>
<!-- Col6 shoes -->
<path d="M226.6 783.5 Q227.5 777 233.5 772.5 L234.8 770.3 L242.8 770.3 Q244.8 774 244.5 781 Q241 786.2 232.5 786.5 Q227 786.5 226.6 783.5Z" fill="#3a2b1a" stroke="#120e08" stroke-width="1"/>
<path d="M231 776 Q236 774 240 777" fill="none" stroke="#141008" stroke-width="1"/>
<path d="M252.6 771 L260.5 770.3 Q264 772 265.5 776 Q272 779 272.8 783.6 Q271 786.6 263.5 786.5 Q254 785 252.8 780 Z" fill="#3a2b1a" stroke="#120e08" stroke-width="1"/>
<path d="M256 773 Q259 772 257.5 774.5" fill="#c08850" stroke="none"/>
<path d="M258 777 Q263 775 266 779" fill="none" stroke="#141008" stroke-width="1"/>
<!-- Col7 arm -->
<path d="M315 786 L322.5 786 L322.5 792 Q322 796 318 796 Q314.5 795.5 314 791Z" fill="#e0a65f"/>
<path d="M317.5 763 Q321 761 324 763.5 L324 784.5 Q318 784 311.5 780.5Z" fill="#9a7b3b" stroke="#1e1a10" stroke-width="1"/>
<!-- Col8 arm -->
<path d="M383 785 L390 785 L390 792 Q389 796 386 796 Q383 795.5 382.5 791Z" fill="#e0a65f"/>
<path d="M379.5 765 Q381 761 384.5 762 L392.5 781.5 Q389 785 382.5 786 Z" fill="#9a7b3b" stroke="#1e1a10" stroke-width="1"/>
<!-- Col9 limb -->
<path d="M448.5 765 Q449 761.5 454 762 Q459.5 762 459.5 766 L459.3 793 Q458 796 455 795.5 Q452.5 795 452 792Z" fill="#e0a65f"/>
<!-- Col10 limb -->
<path d="M517 766 Q517.5 762 522 762 Q527.5 762 527.5 766 L525 792 Q524 796 521 795.5 Q518 795 517.5 792Z" fill="#e0a65f"/>
<g transform="translate(1 0)">
<!-- Col11 hand -->
<path d="M583.2 772 Q583.5 762 589 762 Q594 762.5 596.8 775 L596.8 787.5 Q595 789 594 787 L592.3 780 L591.6 787.5 Q594.5 792 593.8 795.2 Q587 792 584 785 Q583 780 583.2 772Z" fill="#e0a65f"/>
<path d="M585.9 782.3 Q587.5 790 593.3 794.6" fill="none" stroke="#2a2010" stroke-width="1.4"/>
<!-- Col12 hand -->
<path d="M651.9 770 Q653 762 658.3 762 Q663.8 762.5 664 770 L664.3 780.3 Q662 790 654 794.8 Q651.5 793 651.9 788Z" fill="#e0a65f"/>
<path d="M657.4 778.8 Q658 787 653.9 792.7" fill="none" stroke="#1e1608" stroke-width="1.5"/>
<path d="M662.8 781.3 Q661 791 654.9 794.6" fill="none" stroke="#1e1608" stroke-width="1.3"/>
<path d="M656.3 781.5 Q656.5 786 654.5 789.5" fill="none" stroke="#fff" stroke-width="0.9"/>
<!-- Col13 head -->
<path d="M713 777.5 Q709 778 710 782.5 Q711.5 786.5 716 786Z" fill="#e0a65f" stroke="#1c1c1c" stroke-width="1"/>
<path d="M740 777.5 Q743.5 778.5 742.5 782.5 Q741 786 737.5 786Z" fill="#e0a65f" stroke="#1c1c1c" stroke-width="1"/>
<path d="M712 780.5 Q714 783 713.5 785" fill="none" stroke="#111" stroke-width="1.6"/>
<path d="M718.5 765 Q724 761.5 731 762.2 Q740.5 764 741 773.5 Q740.5 784 737 790 Q732.5 795.5 727.5 795.3 Q721 794 717 787 Q714.5 781 715.5 773 Q716.5 767.5 718.5 765Z" fill="#e0a65f" stroke="#1c1c1c" stroke-width="1.2"/>
<path d="M729.2 780.5 Q731.5 782.5 729.8 785.3 L728.5 785.5 M725.5 789.3 Q727.8 791 730.3 789.5" fill="none" stroke="#1c1c1c" stroke-width="1"/>
<!-- Col14 eyebrows -->
<path d="M770.8 782.6 Q779 770.2 793 778.6 L792.6 781.3 Q781 775.6 770.8 782.6Z" fill="#2e2416" stroke="#141008" stroke-width="0.6"/>
<path d="M800.8 781.8 Q808.5 771.6 818 779.8 L817.6 782.3 Q809 776.2 800.8 781.8Z" fill="#2e2416" stroke="#141008" stroke-width="0.6"/>
</g>
</g>
</svg>
<!-- THUMBS END -->
<div class="a" style="left:0;top:815px;width:828px;height:1px;background:#2e2e2e"></div>
<div class="a" style="left:0;top:816px;width:828px;height:9px;background:#575757"></div>
<div class="a" style="left:0;top:825px;width:828px;height:3px;background:#2e2e2e"></div>
<!-- UI START -->
<svg class="a" style="left:0;top:0" width="828" height="828" viewBox="0 0 828 828">
<!-- ===== viewer toolbar ===== -->
<!-- safe area -->
<rect x="624.8" y="72.8" width="12.6" height="9" rx="1.5" fill="none" stroke="#cfcfcf" stroke-width="1.2"/>
<rect x="627.5" y="75.2" width="7.4" height="4.2" fill="#3a3a3a" stroke="#cfcfcf" stroke-width="1"/>
<!-- grid -->
<rect x="645.9" y="72.8" width="9" height="9" fill="#2e2e2e" stroke="#d6d6d6" stroke-width="1"/>
<path d="M648.9 72.8V81.8M651.9 72.8V81.8M645.9 75.8H654.9M645.9 78.8H654.9" stroke="#d6d6d6" stroke-width="1"/>
<!-- blue button -->
<rect x="669" y="69.2" width="18.2" height="16.2" fill="#5182ad"/>
<circle cx="678.2" cy="77.3" r="6.1" fill="none" stroke="#fff" stroke-width="1.3"/>
<rect x="674.2" y="74.8" width="8" height="5.2" rx="0.8" fill="#fff"/>
<!-- onion skin -->
<path d="M691.8 74.2 L695.8 72.2 L695.8 77.8 L692 79.9 Z" fill="#dadada"/><path d="M695 76.3 L695.1 82.4 M698.7 78.3 L698.8 84.5" stroke="#262626" stroke-width="1"/><path d="M695.5 76.6 L699.6 74.4 L699.7 79.6 L695.6 81.8 Z M699.2 78.5 L704 75.6 L704 81.5 L699.3 83.9 Z" fill="#dadada"/>
<!-- camera -->
<circle cx="713.6" cy="74.8" r="2.1" fill="none" stroke="#d8d8d8" stroke-width="1.4"/>
<circle cx="719.4" cy="74.6" r="2.3" fill="none" stroke="#d8d8d8" stroke-width="1.4"/>
<rect x="711" y="77.8" width="8.6" height="5.2" fill="#d8d8d8"/>
<path d="M719.5 80.4 L723 78 L723 83 Z" fill="#d8d8d8"/>
<!-- pause -->
<rect x="740" y="72.8" width="3" height="9.2" rx="0.5" fill="#d8d8d8"/>
<rect x="745" y="72.8" width="3" height="9.2" rx="0.5" fill="#d8d8d8"/>
<!-- eye -->
<path d="M766.6 77.3 Q773.6 67.8 780.6 77.3 Q773.6 86.8 766.6 77.3Z" fill="#d8d8d8"/>
<circle cx="773.6" cy="77.3" r="3.7" fill="#2e2e2e"/>
<circle cx="773.6" cy="77.3" r="2.2" fill="#dcdcdc"/>
<!-- dotted eye -->
<rect x="788" y="71" width="16.5" height="12.8" fill="none" stroke="#d8d8d8" stroke-width="1" stroke-dasharray="1.6 1.4"/>
<path d="M789.6 77.3 Q796.6 68 803.6 77.3 Q796.6 86.6 789.6 77.3Z" fill="#d8d8d8"/>
<circle cx="796.6" cy="77.3" r="3.7" fill="#2e2e2e"/>
<circle cx="796.6" cy="77.3" r="2.2" fill="#dcdcdc"/>
<!-- ruler ticks -->
<rect x="100" y="93" width="1" height="3" fill="#bdbdbd"/>
<rect x="260" y="87" width="1.3" height="9" fill="#c8c8c8"/>
<rect x="421" y="93" width="1" height="3" fill="#bdbdbd"/>
<rect x="581" y="93" width="1" height="3" fill="#bdbdbd"/>
<rect x="741.5" y="93" width="1" height="3" fill="#bdbdbd"/>

<!-- ===== playback bar ===== -->
<path d="M-1 626.3 L6.8 621.7 L6.8 631 Z" fill="#d2d2d2"/>
<path d="M19.8 626.3 L27 621.7 L27 631 Z" fill="#d2d2d2"/>
<rect x="28" y="621.7" width="2.3" height="9.3" fill="#d2d2d2"/>
<rect x="37.7" y="616.4" width="22.2" height="20.3" rx="2.5" fill="#4f80a8"/>
<rect x="44.9" y="621.2" width="3.1" height="10.7" fill="#fff"/>
<rect x="50.1" y="621.2" width="3" height="10.7" fill="#fff"/>
<path d="M67.6 621.5 L77.3 626.7 L67.6 632 Z" fill="#d2d2d2"/>
<!-- loop -->
<path d="M91 628 V623.5 H100.5 M98.5 621 L101.3 623.5 L98.5 626 M102.3 624.8 V629.4 H92.5 M94.5 627 L91.7 629.4 L94.5 631.8" fill="none" stroke="#d2d2d2" stroke-width="1.7"/>
<rect x="114.8" y="621.2" width="2.4" height="10.6" fill="#d2d2d2"/>
<path d="M118.3 621.5 L125.4 626.6 L118.3 631.8 Z" fill="#d2d2d2"/>
<path d="M138.9 621.5 L146.7 626.6 L138.9 631.8 Z" fill="#d2d2d2"/>
<rect x="147.6" y="621.2" width="2.4" height="10.6" fill="#d2d2d2"/>
<rect x="157" y="615" width="1" height="23" fill="#333"/>
<!-- color circles -->
<g stroke="#2a2a2a" stroke-width="1">
<path d="M162.8 626.3 A5.5 5.5 0 0 1 173.8 626.3Z" fill="#ff0000"/>
<path d="M162.8 626.3 A5.5 5.5 0 0 0 173.8 626.3Z" fill="#6c6c6c"/>
<path d="M182.8 626.3 A5.5 5.5 0 0 1 193.8 626.3Z" fill="#00ff00"/>
<path d="M182.8 626.3 A5.5 5.5 0 0 0 193.8 626.3Z" fill="#6c6c6c"/>
<path d="M202.8 626.3 A5.5 5.5 0 0 1 213.8 626.3Z" fill="#0000ff"/>
<path d="M202.8 626.3 A5.5 5.5 0 0 0 213.8 626.3Z" fill="#6c6c6c"/>
</g>
<circle cx="231.1" cy="626.3" r="5.2" fill="#6a6a6a"/>
<rect x="245.5" y="615" width="1" height="23" fill="#333"/>
<rect x="247" y="616.2" width="23.2" height="20.7" rx="2.5" fill="#5182ad"/>
<path d="M252 623.8 H254.6 L258.8 620.5 V632 L254.6 628.8 H252Z" fill="#fff"/>
<path d="M260.3 623.5 Q262 626.3 260.3 629.1 M262.2 621.5 Q265.5 626.3 262.2 631.1" fill="none" stroke="#fff" stroke-width="1.5"/>
<rect x="271.8" y="615" width="1" height="23" fill="#333"/>
<!-- bars -->
<rect x="278.8" y="627.2" width="2" height="4.4" fill="#d8d8d8"/>
<rect x="282.8" y="625.2" width="2" height="6.4" fill="#d8d8d8"/>
<rect x="286.8" y="622.6" width="2" height="9" fill="#d8d8d8"/>
<rect x="290.8" y="620.5" width="2" height="11.1" fill="#d8d8d8"/>
<!-- magnifier -->
<circle cx="306.6" cy="625.6" r="4.3" fill="none" stroke="#d8d8d8" stroke-width="1.5"/>
<path d="M309.8 628.8 L315.3 632.3" stroke="#d8d8d8" stroke-width="2"/>
<rect x="322.3" y="615" width="1" height="23" fill="#333"/>
<path d="M339.8 621.8 L332.2 626.9 L339.8 632" fill="none" stroke="#5f5f5f" stroke-width="1.3"/>
<path d="M381.5 621.8 L389.1 626.9 L381.5 632" fill="none" stroke="#5f5f5f" stroke-width="1.3"/>
<path d="M360.3 620.5 L366.5 626.6 L360.3 632.8 L354.1 626.6Z" fill="#7a7a7a" stroke="#e0e0e0" stroke-width="1.5"/>
<rect x="397.5" y="615" width="1" height="23" fill="#333"/>
<!-- zoom in/out -->
<circle cx="410.4" cy="624.9" r="4.4" fill="none" stroke="#d8d8d8" stroke-width="1.4"/>
<path d="M407.8 624.9 H413 M410.4 622.3 V627.5" stroke="#d8d8d8" stroke-width="1.4"/>
<path d="M413.6 628.2 L418.8 632.6" stroke="#d8d8d8" stroke-width="1.9"/>
<circle cx="434.5" cy="624.9" r="4.4" fill="none" stroke="#d8d8d8" stroke-width="1.4"/>
<path d="M431.9 624.9 H437.1" stroke="#d8d8d8" stroke-width="1.4"/>
<path d="M437.7 628.2 L442.8 632.6" stroke="#d8d8d8" stroke-width="1.9"/>
<!-- flip h -->
<path d="M459.3 621.2 L459.3 632 L454.2 632 Z" fill="#d8d8d8"/>
<path d="M460.8 623.5 L464.6 631.3 L460.8 631.3 Z" fill="none" stroke="#d8d8d8" stroke-width="1.1"/>
<!-- flip v -->
<path d="M479 626 L489.8 621.2 L489.8 625.8 Z" fill="#d8d8d8"/>
<path d="M481.5 627.4 L489.3 627.4 L489.3 631.3 Z" fill="none" stroke="#d8d8d8" stroke-width="1.1"/>
<rect x="504.6" y="623.9" width="6.3" height="5.4" rx="1.2" fill="#d8d8d8"/>
<rect x="521.2" y="615" width="1" height="23" fill="#333"/>
<!-- fps box -->
<rect x="577.5" y="617.8" width="36.2" height="16.2" rx="2" fill="#2c2c2c"/>
<rect x="618.5" y="618.5" width="11.5" height="14.5" fill="#5a5a5a"/>
<rect x="631" y="618.5" width="11.5" height="14.5" fill="#5a5a5a"/>
<path d="M625.8 623 L622.6 625.8 L625.8 628.6Z" fill="#cfcfcf"/>
<path d="M635 623 L638.2 625.8 L635 628.6Z" fill="#cfcfcf"/>
<rect x="647.5" y="624.2" width="181" height="3.2" fill="#282828"/>
<rect x="767" y="619" width="14" height="12.8" rx="2" fill="#a2a29e"/>

<!-- ===== timeline toolbar ===== -->
<rect x="0" y="684" width="4" height="10" fill="none" stroke="#666" stroke-width="1"/>
<circle cx="20.4" cy="695.2" r="5.9" fill="none" stroke="#dcdcdc" stroke-width="1.3"/>
<path d="M17.9 687.4 H22.5 M20.2 687.4 V689.3 M24.6 690.6 L26.3 688.9" stroke="#dcdcdc" stroke-width="1.3"/>
<path d="M18.1 698.6 V691.9 L22.7 698.5 V691.9" fill="none" stroke="#e4e4e4" stroke-width="1.6" stroke-linejoin="miter"/>
<g fill="none" stroke="#6a6a6a" stroke-width="1.2">
<rect x="38" y="688.5" width="5.6" height="3" fill="#6a6a6a"/>
<rect x="38" y="693" width="5.6" height="3"/>
<rect x="38" y="697.5" width="5.6" height="3"/>
<path d="M48.4 688.5 V700.5 M45.8 697.5 L48.4 700.5 L51 697.5"/>
</g>
<rect x="57" y="681" width="1" height="26" fill="#2e2e2e"/>
<rect x="107.3" y="681" width="1" height="26" fill="#2e2e2e"/>
<rect x="182.4" y="681" width="1" height="26" fill="#2e2e2e"/>
<!-- refresh -->
<path d="M190.8 696.8 A5.4 5.4 0 0 1 198.6 689.8" fill="none" stroke="#e0e0e0" stroke-width="1.6"/>
<path d="M196.6 687.6 L200.2 689.8 L197 692.6" fill="none" stroke="#e0e0e0" stroke-width="1.5"/>
<path d="M201.1 692.6 A5.4 5.4 0 0 1 193.2 699.6" fill="none" stroke="#e0e0e0" stroke-width="1.6"/>
<path d="M195.2 701.8 L191.6 699.6 L194.8 696.8" fill="none" stroke="#e0e0e0" stroke-width="1.5"/>
<g fill="none" stroke="#686868" stroke-width="1.3">
<path d="M214 691 H226 M216.8 688.6 L214 691 L216.8 693.4 M213.5 698.2 H225.8 M223 695.8 L225.8 698.2 L223 700.6"/>
<path d="M243 688.5 V698 M238 697 Q242 694.5 243 689 Q244 694.5 248 697"/>
<circle cx="243" cy="698.6" r="1.8" fill="#686868"/>
<circle cx="237.8" cy="697.2" r="1" fill="#686868"/><circle cx="248.2" cy="697.2" r="1" fill="#686868"/>
<path d="M261.3 690.6 H264 Q267.5 690.6 269 694.6 Q270.5 698.6 274 698.6 M261.3 698.6 H264 Q267.5 698.6 269 694.6 Q270.5 690.6 274 690.6 M272 688.6 L274.2 690.6 L272 692.6 M272 696.6 L274.2 698.6 L272 700.6"/>
</g>
</svg>
<!-- UI END -->
<!-- TEXTS START -->
<div class="t" style="left:540px;top:620px;color:#d6d6d6;font-size:11px">FPS -- /</div>
<div class="t" style="left:580px;top:620px;color:#ececec;font-size:11px">24</div>
<div class="t" style="left:63px;top:686px;color:#6a6a6a;font-size:13px;line-height:15px">&#8722;1</div>
<div class="t" style="left:87px;top:686px;color:#6a6a6a;font-size:13px;line-height:15px">+1</div>
<div class="t" style="left:116px;top:687px;color:#666;font-size:12.5px;line-height:14px;letter-spacing:-0.6px">1<span style="font-size:11px;letter-spacing:0">'</span><span style="font-size:10px">s</span></div>
<div class="t" style="left:138px;top:687px;color:#666;font-size:12.5px;line-height:14px;letter-spacing:-0.6px">2<span style="font-size:11px;letter-spacing:0">'</span><span style="font-size:10px">s</span></div>
<div class="t" style="left:163px;top:687px;color:#666;font-size:12.5px;line-height:14px;letter-spacing:-0.6px">3<span style="font-size:11px;letter-spacing:0">'</span><span style="font-size:10px">s</span></div>
<!-- TEXTS END -->
</body></html>
